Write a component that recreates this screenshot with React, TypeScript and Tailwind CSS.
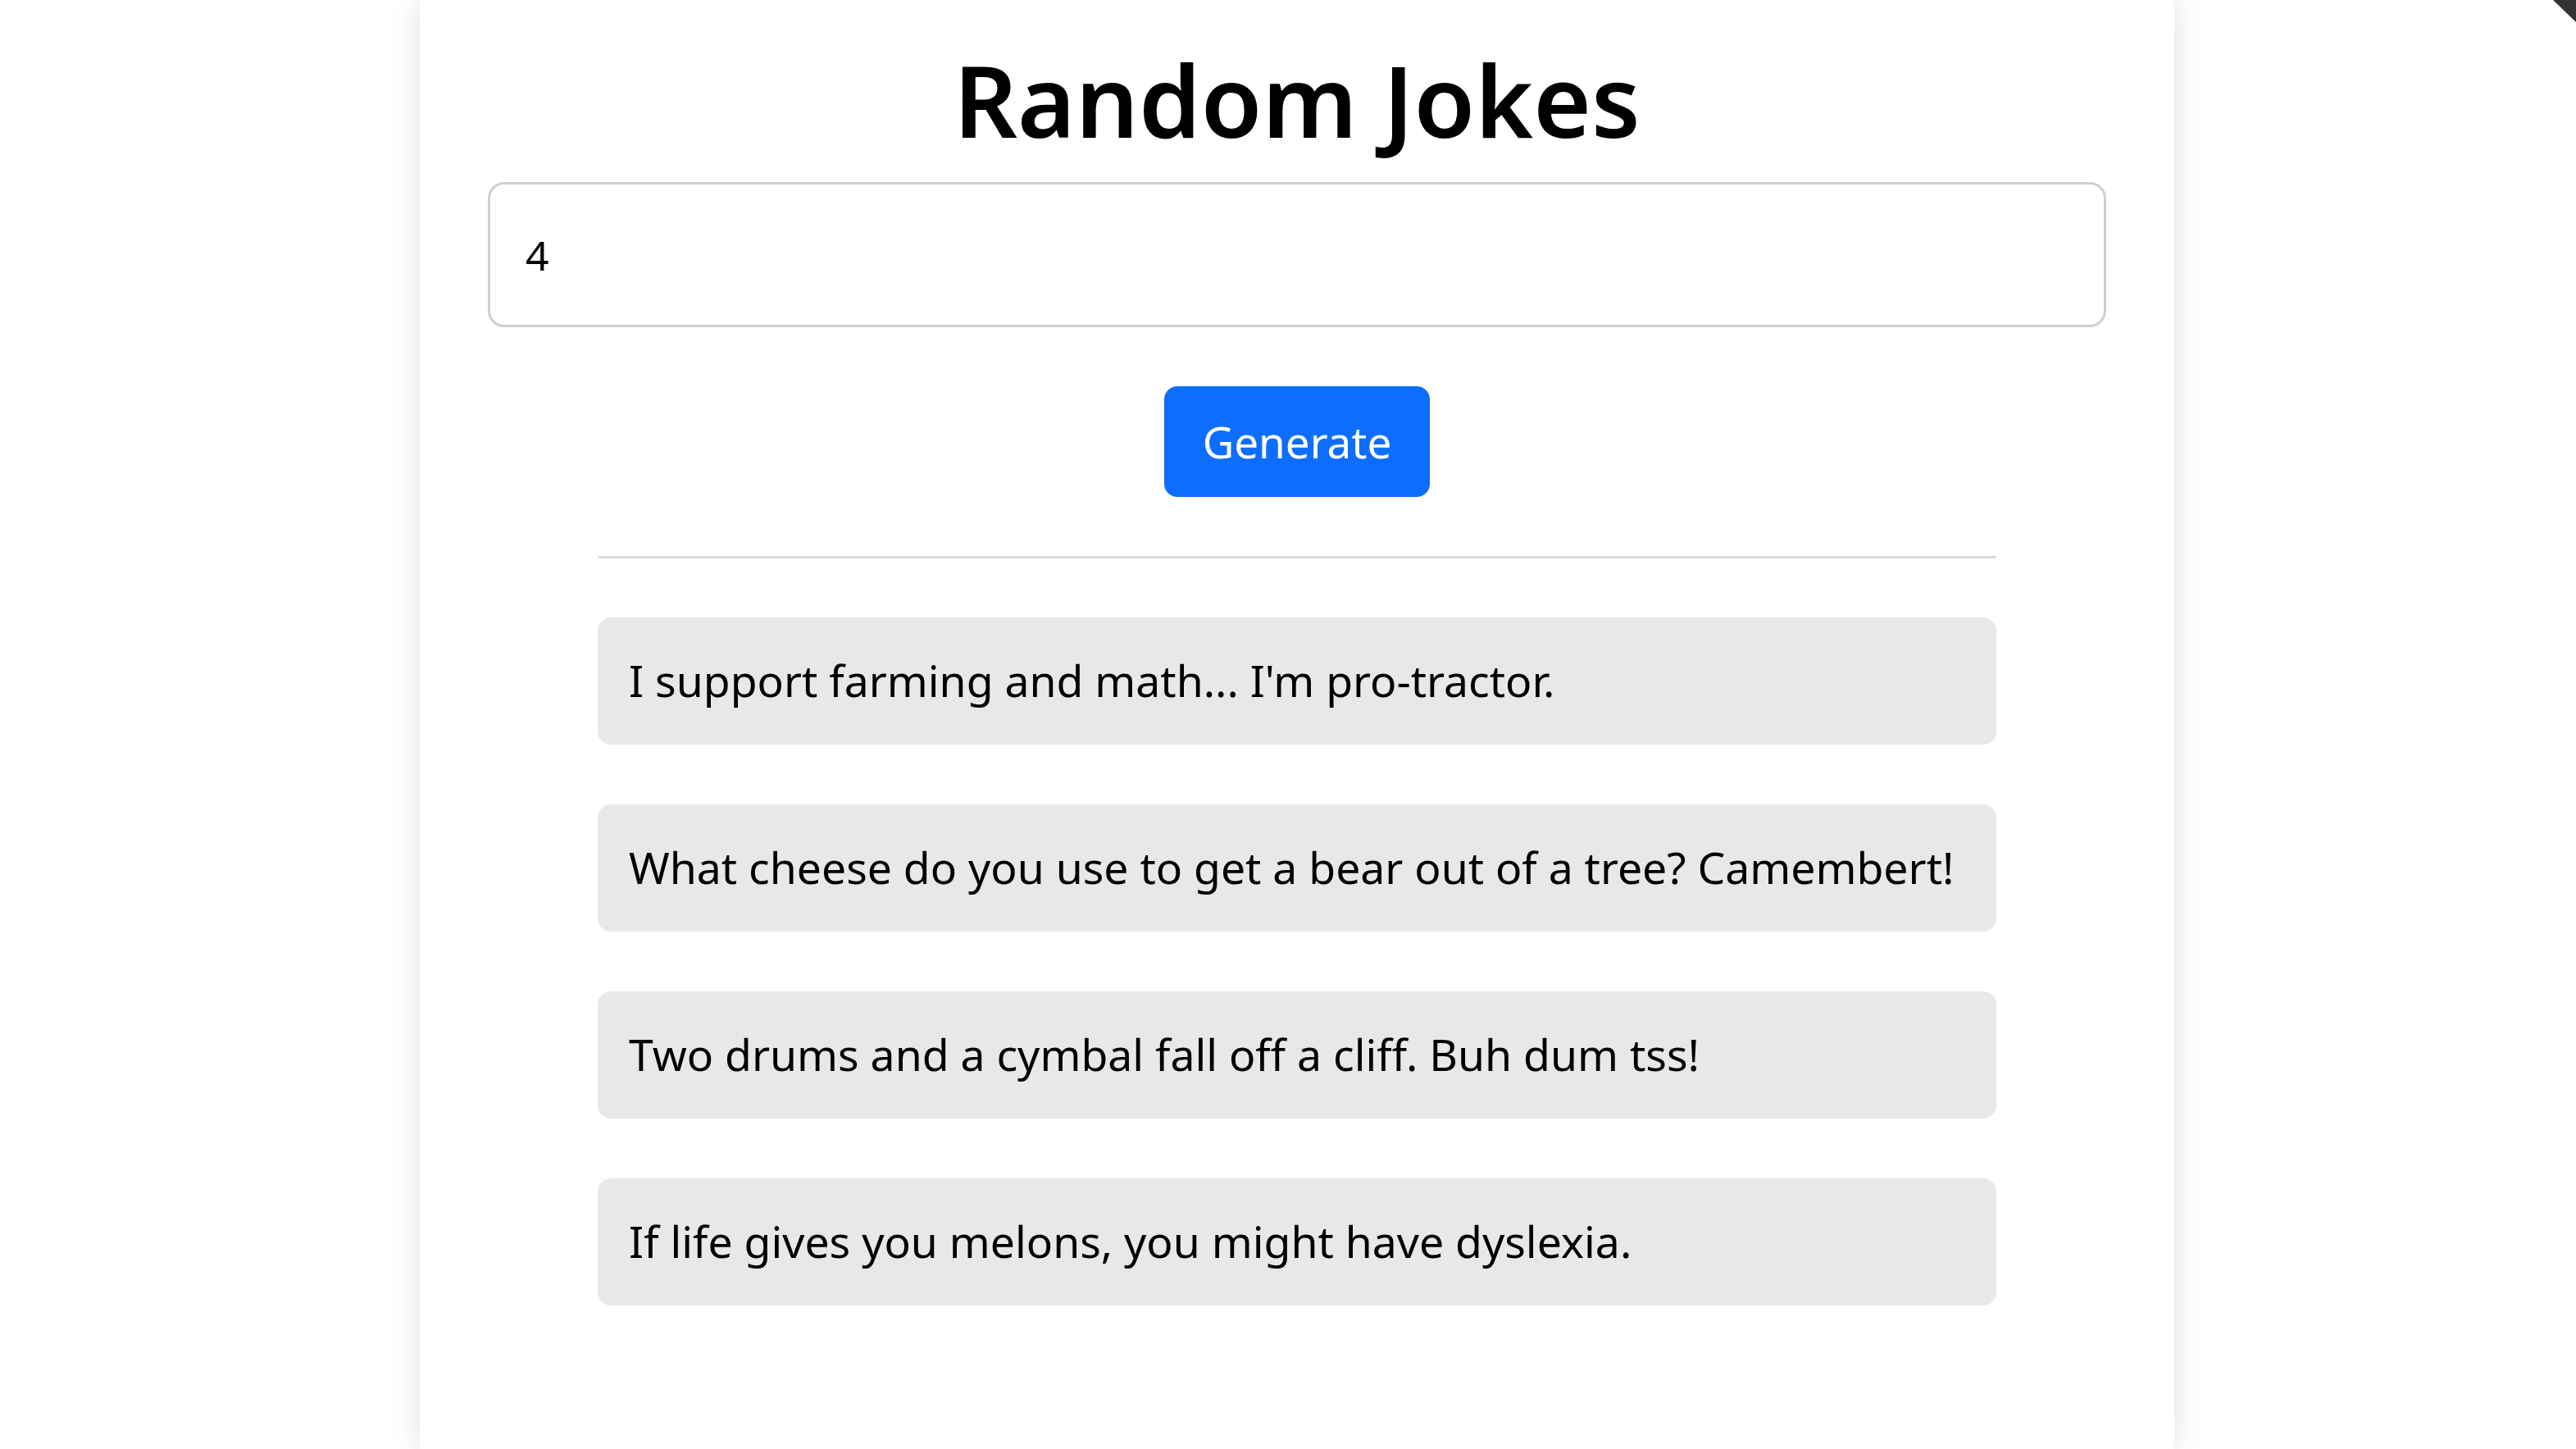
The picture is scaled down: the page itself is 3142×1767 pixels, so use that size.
import { useState } from 'react';

const jokes = [
  "I support farming and math... I'm pro-tractor.",
  'What cheese do you use to get a bear out of a tree? Camembert!',
  'Two drums and a cymbal fall off a cliff. Buh dum tss!',
  'If life gives you melons, you might have dyslexia.',
];

export default function App() {
  const [count, setCount] = useState('4');

  return (
    <div className="relative min-h-screen overflow-hidden bg-white font-['Noto_Sans',sans-serif] text-black">
      <div className="ml-[512px] min-h-[1767px] w-[2140px] bg-white pb-[120px] shadow-[0_0_34px_rgba(0,0,0,0.13)]">
        <h1 className="pt-[61px] text-center text-[121px] font-semibold leading-none">Random Jokes</h1>

        <div className="mt-[40px] px-[83px]">
          <input
            type="text"
            value={count}
            onChange={(e) => setCount(e.target.value)}
            className="h-[177px] w-full rounded-[20px] border-[3px] border-[#cfcfcf] px-[43px] text-[50px] outline-none"
          />
        </div>

        <div className="mt-[72px] flex justify-center">
          <button className="h-[135px] w-[324px] rounded-[16px] bg-[#0d6efd] text-[53px] text-white">
            Generate
          </button>
        </div>

        <div className="mx-auto mt-[72px] w-[1706px]">
          <hr className="border-t-[3px] border-[#dcdcdc]" />
          <div className="mt-[72px] flex flex-col gap-[73px]">
            {jokes.map((joke) => (
              <div
                key={joke}
                className="flex h-[155px] items-center whitespace-nowrap rounded-[16px] bg-[#e8e8e8] px-[38px] text-[53.5px]"
              >
                {joke}
              </div>
            ))}
          </div>
        </div>
      </div>

      <svg className="absolute right-0 top-0" width="30" height="28" viewBox="0 0 30 28">
        <polygon points="2,0 30,0 30,27" fill="#333333" />
      </svg>
    </div>
  );
}
